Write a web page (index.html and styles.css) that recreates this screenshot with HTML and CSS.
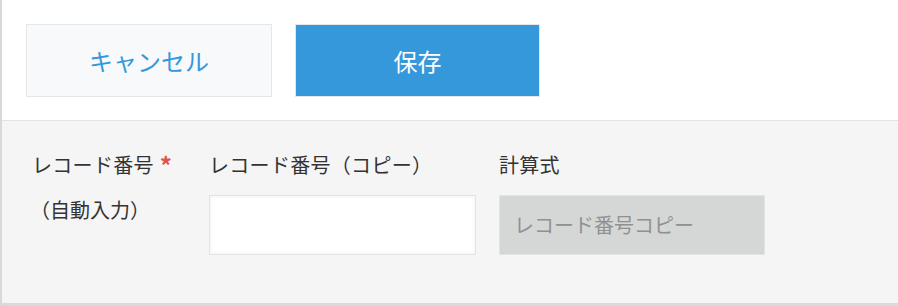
FILE: index.html
```html
<!DOCTYPE html>
<html lang="ja">
<head>
    <meta charset="UTF-8">
    <meta name="viewport" content="width=device-width, initial-scale=1.0">
    <title>レコード編集</title>
    <link rel="stylesheet" href="styles.css">
</head>
<body>
    <div class="page">
        <!-- Toolbar -->
        <div class="toolbar">
            <button class="btn btn-cancel">キャンセル</button>
            <button class="btn btn-save">保存</button>
        </div>

        <!-- Form -->
        <div class="form">
            <div class="field field-record">
                <div class="label">レコード番号<span class="required">*</span></div>
                <div class="value">（自動入力）</div>
            </div>
            <div class="field">
                <div class="label">レコード番号（コピー）</div>
                <input type="text" class="input">
            </div>
            <div class="field field-calc">
                <div class="label">計算式</div>
                <div class="input input-calc">レコード番号コピー</div>
            </div>
        </div>
    </div>
</body>
</html>
```

FILE: styles.css
```css
* {
    margin: 0;
    padding: 0;
    box-sizing: border-box;
    font-family: "Noto Sans CJK JP", "Noto Sans", sans-serif;
}

body {
    background: #fff;
    color: #333;
}

.page {
    width: 898px;
    height: 306px;
    border-left: 2px solid #d8d8d8;
    border-bottom: 3px solid #dadada;
    display: flex;
    flex-direction: column;
}

.toolbar {
    height: 121px;
    padding: 24px 0 0 24px;
    display: flex;
    align-items: flex-start;
    gap: 23px;
    background: #fff;
    border-bottom: 1px solid #e3e3e3;
}

.btn {
    width: 246px;
    height: 73px;
    font-size: 24px;
    border: 1px solid #e3e7e9;
    cursor: pointer;
}

.btn-cancel {
    background: #f7f9fa;
    color: #3498db;
}

.btn-save {
    width: 245px;
    background: #3498db;
    border-color: #e3e7e9;
    color: #fff;
}

.form {
    flex: 1;
    background: #f5f5f5;
    padding: 29px 0 0 30px;
    display: flex;
    gap: 24px;
}

.field-record {
    width: 153px;
}

.field-calc {
    margin-left: -1px;
}

.label {
    font-size: 20px;
    line-height: 30px;
    color: #333;
    white-space: nowrap;
    letter-spacing: 0.3px;
}

.required {
    color: #e0524a;
    font-size: 24px;
    font-weight: bold;
    margin-left: 6px;
    position: relative;
    top: 2px;
    line-height: 0;
}

.value {
    margin-top: 15px;
    font-size: 20px;
    line-height: 30px;
    margin-left: -2px;
}

.input {
    display: block;
    margin-top: 15px;
    width: 267px;
    height: 60px;
    background: #fff;
    border: 1px solid #e3e3e3;
    box-shadow: inset 0 0 4px #eef0f0;
    outline: none;
}

.input-calc {
    width: 266px;
    background: #d5d7d7;
    box-shadow: none;
    color: #8f9191;
    font-size: 20px;
    line-height: 58px;
    padding-left: 14px;
}
```
